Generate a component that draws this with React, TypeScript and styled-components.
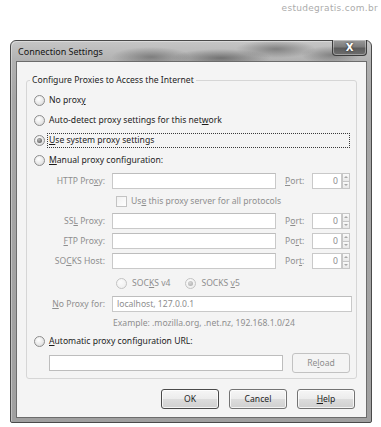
import React from "react";
import styled, { createGlobalStyle } from "styled-components";

const Global = createGlobalStyle`
  html, body { margin: 0; padding: 0; background: #ffffff; }
  body { font-family: "Noto Sans", "Open Sans", sans-serif; font-size: 8.6px; color: #1c1c1c; }
`;

const Page = styled.div`
  width: 381px;
  height: 427px;
  display: flex;
  flex-direction: column;
  overflow: hidden;
`;

const Watermark = styled.div`
  align-self: flex-end;
  margin: 2px 3px 0 0;
  height: 12px;
  line-height: 12px;
  font-family: "DejaVu Sans", sans-serif;
  font-size: 9px;
  letter-spacing: 0.3px;
  color: #acacac;
`;

const Window = styled.div`
  margin: 26px 0 0 10px;
  width: 362px;
  height: 383px;
  box-sizing: border-box;
  border: 1px solid #4a4a4a;
  border-radius: 6px 6px 2px 2px;
  padding: 0 4px 4px 5px;
  display: flex;
  flex-direction: column;
  background:
    radial-gradient(ellipse 40px 10px at 140px 16px, rgba(80,80,80,0.55), rgba(80,80,80,0) 100%),
    radial-gradient(ellipse 50px 9px at 210px 17px, rgba(70,70,70,0.6), rgba(70,70,70,0) 100%),
    radial-gradient(ellipse 40px 9px at 265px 8px, rgba(80,80,80,0.55), rgba(80,80,80,0) 100%),
    radial-gradient(ellipse 30px 9px at 320px 14px, rgba(80,80,80,0.5), rgba(80,80,80,0) 100%),
    linear-gradient(to bottom, #c6c6c6 0px, #b0b0b0 21px, #a6a6a6 60px, #a0a0a0 100%);
  box-shadow: inset 1px 1px 0 rgba(255,255,255,0.35);
`;

const TitleBar = styled.div`
  height: 21px;
  display: flex;
  align-items: flex-start;
  justify-content: space-between;
`;

const Title = styled.div`
  padding: 5px 0 0 2px;
  font-size: 9px;
  line-height: 12px;
  color: #141414;
`;

const CloseButton = styled.div`
  width: 35px;
  height: 16px;
  margin: -1px 0 0 0;
  box-sizing: border-box;
  border: 1px solid #3c3c3c;
  border-top: none;
  border-radius: 0 0 4px 4px;
  background: linear-gradient(to bottom, #9a9a9a 0%, #7c7c7c 45%, #5c5c5c 55%, #6e6e6e 100%);
  box-shadow: inset 0 0 0 1px rgba(255,255,255,0.35);
  display: flex;
  align-items: center;
  justify-content: center;
  color: #ffffff;
  font-family: "DejaVu Sans", sans-serif;
  font-weight: bold;
  font-size: 10px;
  line-height: 10px;
  text-shadow: 0 0 2px #222;
`;

const Client = styled.div`
  flex: 1;
  box-sizing: border-box;
  border: 1px solid #6c6c6c;
  background: #f4f4f4;
  padding: 0 9px 8px 9px;
  display: flex;
  flex-direction: column;
`;

const LegendSpacer = styled.div`
  height: 11px;
`;

const Group = styled.fieldset`
  margin: 0;
  padding: 0 6px 5px 7px;
  min-width: 0;
  border: 1px solid #d6d6d6;
  border-radius: 3px;
  display: flex;
  flex-direction: column;
`;

const Legend = styled.legend`
  margin-left: -4px;
  padding: 0 2px;
  font-size: 8.6px;
  line-height: 14px;
  color: #1c1c1c;
`;

const GroupWrap = styled.div`
  display: flex;
  flex-direction: column;
`;

const RadioRow = styled.div<{ $top?: number }>`
  height: 20px;
  margin-top: ${(p) => p.$top ?? 0}px;
  display: flex;
  align-items: center;
  gap: 4px;
`;

const RadioMark = styled.span<{ $checked?: boolean; $disabled?: boolean }>`
  flex: none;
  position: relative;
  width: 11px;
  height: 11px;
  box-sizing: border-box;
  border-radius: 50%;
  border: 1px solid ${(p) => (p.$disabled ? "#c3c3c3" : "#8d8d8d")};
  background: ${(p) =>
    p.$disabled
      ? "radial-gradient(circle at 40% 35%, #fbfbfb, #ececec)"
      : "radial-gradient(circle at 40% 35%, #ffffff, #e6e6e6 60%, #cfcfcf)"};
  &::after {
    content: "";
    display: ${(p) => (p.$checked ? "block" : "none")};
    position: absolute;
    inset: 2px;
    border-radius: 50%;
    background: ${(p) =>
      p.$disabled
        ? "radial-gradient(circle at 40% 35%, #d8d8d8, #a9a9a9)"
        : "radial-gradient(circle at 40% 35%, #b5b5b5, #4e4e4e)"};
  }
`;

const Label = styled.span<{ $disabled?: boolean; $focus?: boolean }>`
  color: ${(p) => (p.$disabled ? "#8e8e8e" : "#1c1c1c")};
  line-height: 12px;
  white-space: nowrap;
  ${(p) =>
    p.$focus
      ? `flex: 1; border: 1px dotted #3a3a3a; height: 13px; line-height: 13px; padding-left: 1px; margin-left: -2px;`
      : ""}
`;

const Key = styled.u`
  text-decoration: underline;
  text-underline-offset: 1px;
`;

const ManualGrid = styled.div`
  margin-top: 3px;
  display: grid;
  grid-template-columns: 71px 166px 20px 38px;
  column-gap: 7px;
  align-items: center;
`;

const GridRow = styled.div<{ $h: number; $top?: number }>`
  grid-column: 1 / -1;
  display: grid;
  grid-template-columns: subgrid;
  align-items: center;
  height: ${(p) => p.$h}px;
  margin-top: ${(p) => p.$top ?? 0}px;
`;

const FieldLabel = styled.span`
  text-align: right;
  color: #8e8e8e;
  white-space: nowrap;
  line-height: 12px;
`;

const PortLabel = styled.span`
  color: #8e8e8e;
  white-space: nowrap;
  line-height: 12px;
`;

const Field = styled.div<{ $w?: number; $h?: number; $span?: boolean }>`
  box-sizing: border-box;
  width: ${(p) => (p.$w ? `${p.$w}px` : "100%")};
  height: ${(p) => p.$h ?? 16}px;
  border: 1px solid #c9c9c9;
  border-top-color: #bdbdbd;
  background: #ffffff;
  color: #8e8e8e;
  padding: 0 4px;
  display: flex;
  align-items: center;
  white-space: nowrap;
  ${(p) => (p.$span ? "grid-column: 2 / -1;" : "")}
`;

const PortBox = styled.div`
  display: flex;
  height: 16px;
`;

const PortField = styled.div`
  box-sizing: border-box;
  width: 30px;
  height: 16px;
  border: 1px solid #c9c9c9;
  background: #ffffff;
  color: #8e8e8e;
  display: flex;
  align-items: center;
  justify-content: flex-end;
  padding-right: 3px;
`;

const Spinner = styled.div`
  width: 8px;
  height: 16px;
  display: flex;
  flex-direction: column;
`;

const SpinHalf = styled.div<{ $down?: boolean }>`
  flex: 1;
  box-sizing: border-box;
  border: 1px solid #c6c6c6;
  ${(p) => (p.$down ? "border-top: none;" : "")}
  background: linear-gradient(to bottom, #fafafa, #e8e8e8);
  display: flex;
  align-items: center;
  justify-content: center;
  &::before {
    content: "";
    border-left: 2px solid transparent;
    border-right: 2px solid transparent;
    ${(p) => (p.$down ? "border-top: 2px solid #a8a8a8;" : "border-bottom: 2px solid #a8a8a8;")}
  }
`;

const InlineCheck = styled.div`
  grid-column: 2 / -1;
  display: flex;
  align-items: center;
  gap: 4px;
  padding-left: 4px;
`;

const CheckBox = styled.span`
  flex: none;
  width: 11px;
  height: 11px;
  box-sizing: border-box;
  border: 1px solid #c3c3c3;
  background: linear-gradient(135deg, #f0f0f0, #ffffff);
`;

const SocksGroup = styled.div`
  grid-column: 2 / -1;
  display: flex;
  align-items: center;
  padding-left: 4px;
  gap: 5px;
`;

const SocksOption = styled.div<{ $gap?: number }>`
  display: flex;
  align-items: center;
  gap: 5px;
  margin-left: ${(p) => p.$gap ?? 0}px;
`;

const ExampleText = styled.span`
  grid-column: 2 / -1;
  color: #8e8e8e;
  padding-left: 1px;
  line-height: 12px;
  white-space: nowrap;
`;

const UrlRow = styled.div`
  margin-top: 2px;
  height: 20px;
  display: flex;
  align-items: center;
  padding-left: 15px;
  gap: 9px;
`;

const Button = styled.div<{ $disabled?: boolean; $default?: boolean }>`
  box-sizing: border-box;
  width: 58px;
  height: 20px;
  border-radius: 3px;
  border: 1px solid
    ${(p) => (p.$disabled ? "#c2c2c2" : p.$default ? "#4a4a4a" : "#737373")};
  background: ${(p) =>
    p.$disabled
      ? "#f4f4f4"
      : "linear-gradient(to bottom, #f6f6f6 0%, #ececec 48%, #dcdcdc 52%, #d0d0d0 100%)"};
  box-shadow: ${(p) => (p.$disabled ? "none" : "inset 0 0 0 1px rgba(255,255,255,0.75)")};
  color: ${(p) => (p.$disabled ? "#8e8e8e" : "#1c1c1c")};
  display: flex;
  align-items: center;
  justify-content: center;
  line-height: 12px;
`;

const ButtonRow = styled.div`
  margin-top: 10px;
  margin-right: 2px;
  display: flex;
  justify-content: flex-end;
  gap: 10px;
`;

const UrlField = styled(Field)`
  border-color: #bdbdbd;
`;

function PortLabelText({ pre, k, post }: { pre: string; k: string; post: string }) {
  return (
    <PortLabel>
      {pre}
      <Key>{k}</Key>
      {post}
    </PortLabel>
  );
}

function PortInput() {
  return (
    <PortBox>
      <PortField>0</PortField>
      <Spinner>
        <SpinHalf />
        <SpinHalf $down />
      </Spinner>
    </PortBox>
  );
}

export default function App() {
  return (
    <Page>
      <Global />
      <Watermark>estudegratis.com.br</Watermark>
      <Window>
        <TitleBar>
          <Title>Connection Settings</Title>
          <CloseButton>X</CloseButton>
        </TitleBar>
        <Client>
          <LegendSpacer />
          <Group>
            <Legend>Configure Proxies to Access the Internet</Legend>
            <GroupWrap>
              <RadioRow $top={3}>
                <RadioMark />
                <Label>
                  No prox<Key>y</Key>
                </Label>
              </RadioRow>
              <RadioRow>
                <RadioMark />
                <Label>
                  Auto-detect proxy settings for this net<Key>w</Key>ork
                </Label>
              </RadioRow>
              <RadioRow>
                <RadioMark $checked />
                <Label $focus>
                  <Key>U</Key>se system proxy settings
                </Label>
              </RadioRow>
              <RadioRow>
                <RadioMark />
                <Label>
                  <Key>M</Key>anual proxy configuration:
                </Label>
              </RadioRow>

              <ManualGrid>
                <GridRow $h={16}>
                  <FieldLabel>
                    HTTP Pro<Key>x</Key>y:
                  </FieldLabel>
                  <Field $w={164} />
                  <PortLabelText pre="" k="P" post="ort:" />
                  <PortInput />
                </GridRow>
                <GridRow $h={16} $top={4}>
                  <InlineCheck>
                    <CheckBox />
                    <Label $disabled>
                      Us<Key>e</Key> this proxy server for all protocols
                    </Label>
                  </InlineCheck>
                </GridRow>
                <GridRow $h={16} $top={4}>
                  <FieldLabel>
                    SS<Key>L</Key> Proxy:
                  </FieldLabel>
                  <Field $w={164} />
                  <PortLabelText pre="P" k="o" post="rt:" />
                  <PortInput />
                </GridRow>
                <GridRow $h={16} $top={4}>
                  <FieldLabel>
                    <Key>F</Key>TP Proxy:
                  </FieldLabel>
                  <Field $w={164} />
                  <PortLabelText pre="Po" k="r" post="t:" />
                  <PortInput />
                </GridRow>
                <GridRow $h={16} $top={4}>
                  <FieldLabel>
                    SO<Key>C</Key>KS Host:
                  </FieldLabel>
                  <Field $w={164} />
                  <PortLabelText pre="Por" k="t" post=":" />
                  <PortInput />
                </GridRow>
                <GridRow $h={18} $top={5}>
                  <SocksGroup>
                    <SocksOption>
                      <RadioMark $disabled />
                      <Label $disabled>
                        SOC<Key>K</Key>S v4
                      </Label>
                    </SocksOption>
                    <SocksOption $gap={10}>
                      <RadioMark $disabled $checked />
                      <Label $disabled>
                        SOCKS <Key>v</Key>5
                      </Label>
                    </SocksOption>
                  </SocksGroup>
                </GridRow>
                <GridRow $h={16} $top={4}>
                  <FieldLabel>
                    <Key>N</Key>o Proxy for:
                  </FieldLabel>
                  <Field $span $w={240}>localhost, 127.0.0.1</Field>
                </GridRow>
                <GridRow $h={14} $top={4}>
                  <ExampleText>Example: .mozilla.org, .net.nz, 192.168.1.0/24</ExampleText>
                </GridRow>
              </ManualGrid>

              <RadioRow $top={1}>
                <RadioMark />
                <Label>
                  <Key>A</Key>utomatic proxy configuration URL:
                </Label>
              </RadioRow>
              <UrlRow>
                <UrlField $w={234} />
                <Button $disabled>
                  Re<Key>l</Key>oad
                </Button>
              </UrlRow>
            </GroupWrap>
          </Group>
          <ButtonRow>
            <Button $default>OK</Button>
            <Button>Cancel</Button>
            <Button>
              <Key>H</Key>elp
            </Button>
          </ButtonRow>
        </Client>
      </Window>
    </Page>
  );
}
